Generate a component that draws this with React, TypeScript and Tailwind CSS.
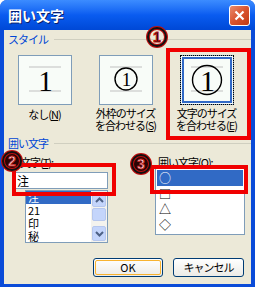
import React from "react";

const font = "font-['Noto_Sans_CJK_JP','Liberation_Sans',sans-serif]";

function Mark({ n, filled }: { n: string; filled?: boolean }) {
  return (
    <svg width="22" height="22" viewBox="0 0 22 22">
      <circle cx="11" cy="11" r="9" fill={filled ? "#2a0505" : "none"} stroke="#c01010" strokeWidth="4" />
      <circle cx="11" cy="11" r="9" fill="none" stroke="#111" strokeWidth="2" />
      <text
        x="11"
        y="16"
        textAnchor="middle"
        fontFamily="Liberation Sans, sans-serif"
        fontWeight="bold"
        fontSize="14"
        fill={filled ? "#f0e0e0" : "#111"}
        stroke="#c01010"
        strokeWidth="0.8"
      >
        {n}
      </text>
    </svg>
  );
}

function Preview({ kind }: { kind: "none" | "outer" | "inner" }) {
  return (
    <svg width="52" height="48" viewBox="0 0 52 48">
      <line x1="10" y1="11" x2="42" y2="11" stroke="#c0c0c0" />
      <line x1="10" y1="35" x2="42" y2="35" stroke="#c0c0c0" />
      {kind === "none" && (
        <text x="26" y="35" textAnchor="middle" fontFamily="Liberation Serif, serif" fontSize="29" fill="#000">
          1
        </text>
      )}
      {kind === "outer" && (
        <>
          <circle cx="26" cy="23" r="11" fill="none" stroke="#000" strokeWidth="1.4" />
          <text x="26" y="30" textAnchor="middle" fontFamily="Liberation Serif, serif" fontSize="19" fill="#000">
            1
          </text>
        </>
      )}
      {kind === "inner" && (
        <>
          <circle cx="26" cy="24" r="14.5" fill="none" stroke="#000" strokeWidth="1.4" />
          <text x="26" y="35" textAnchor="middle" fontFamily="Liberation Serif, serif" fontSize="30" fill="#000">
            1
          </text>
        </>
      )}
    </svg>
  );
}

function Arrow({ up }: { up?: boolean }) {
  return (
    <svg width="9" height="6" viewBox="0 0 9 6">
      <path d={up ? "M1 5 L4.5 1.5 L8 5" : "M1 1 L4.5 4.5 L8 1"} fill="none" stroke="#4d6185" strokeWidth="2" />
    </svg>
  );
}

export default function App() {
  return (
    <div className={`${font} relative w-[255px] h-[287px] bg-[#0A4BD8] rounded-t-[7px] flex flex-col overflow-hidden`}>
      {/* title bar */}
      <div className="h-[30px] shrink-0 flex items-center justify-between pl-[8px] pr-[5px] bg-gradient-to-b from-[#3C8CFF] via-[#0A5CF0] to-[#0048D6]">
        <span className="text-white font-bold text-[14px] leading-none [text-shadow:1px_1px_0_#0a1f6b]">囲い文字</span>
        <div className="w-[21px] h-[21px] rounded-[3px] border border-white bg-gradient-to-br from-[#E88A6B] via-[#D9532E] to-[#C23A12] flex items-center justify-center">
          <svg width="11" height="11" viewBox="0 0 11 11">
            <path d="M1.5 1.5 L9.5 9.5 M9.5 1.5 L1.5 9.5" stroke="#fff" strokeWidth="2.2" />
          </svg>
        </div>
      </div>

      {/* body */}
      <div className="flex-1 mx-[4px] mb-[3px] bg-[#ECE9D8] flex flex-col text-[11px] leading-[12px] tracking-[-1px] text-black">
        <div className="mt-[3px] pl-[4px] flex items-center gap-[6px]">
          <span className="text-[#0046D5]">スタイル</span>
          <div className="flex-1 h-px bg-[#D0CFC0]" />
        </div>

        <div className="mt-[10px] grid grid-cols-[81px_81px_81px]">
          <div className="flex flex-col items-center">
            <div className="w-[54px] h-[50px] border border-[#7F9DB9] bg-[#F8FCF8] flex items-center justify-center">
              <Preview kind="none" />
            </div>
            <div className="mt-[3px] text-center leading-[12px]">なし(<u>N</u>)</div>
          </div>
          <div className="flex flex-col items-center">
            <div className="w-[54px] h-[50px] border border-[#7F9DB9] bg-[#F8FCF8] flex items-center justify-center">
              <Preview kind="outer" />
            </div>
            <div className="mt-[2px] text-center leading-[12px]">
              外枠のサイズ
              <br />
              を合わせる(<u>S</u>)
            </div>
          </div>
          <div className="flex flex-col items-center">
            <div className="w-[54px] h-[50px] border border-[#7F9DB9] bg-[#F8FCF8] p-px">
              <div className="w-full h-full border-2 border-[#3169C6] flex items-center justify-center">
                <div className="border border-dotted border-black flex items-center justify-center">
                  <Preview kind="inner" />
                </div>
              </div>
            </div>
            <div className="mt-[2px] text-center leading-[12px]">
              文字のサイズ
              <br />
              を合わせる(<u>E</u>)
            </div>
          </div>
        </div>

        <div className="mt-[6px] pl-[4px] flex items-center gap-[6px]">
          <span className="text-[#0046D5]">囲い文字</span>
          <div className="flex-1 h-px bg-[#D0CFC0]" />
        </div>

        <div className="mt-[7px] flex pl-[9px]">
          <div className="w-[95px] flex flex-col">
            <div className="pl-[7px]">
              文字(<u>T</u>):
            </div>
            <div className="mt-[4px] h-[17px] border border-[#7F9DB9] bg-white flex items-center pl-[3px] text-[12px]">注</div>
            <div className="mt-[1px] ml-[12px] w-[83px] h-[53px] border border-[#7F9DB9] bg-white flex overflow-hidden text-[11px] tracking-normal">
              <div className="flex-1 flex flex-col">
                <div className="h-[13px] bg-[#316AC5] text-white pl-[2px] leading-[13px]">注</div>
                <div className="h-[13px] pl-[2px] leading-[13px]">21</div>
                <div className="h-[13px] pl-[2px] leading-[13px]">印</div>
                <div className="h-[13px] pl-[2px] leading-[13px]">秘</div>
              </div>
              <div className="w-[16px] bg-[#F4F3EE] flex flex-col">
                <div className="h-[15px] m-px rounded-[2px] border border-[#B6C7EE] bg-[#C4D5FB] flex items-center justify-center">
                  <Arrow up />
                </div>
                <div className="h-[13px] mx-px rounded-[2px] border border-[#B6C7EE] bg-[#C4D5FB]" />
                <div className="flex-1" />
                <div className="h-[15px] m-px rounded-[2px] border border-[#B6C7EE] bg-[#C4D5FB] flex items-center justify-center">
                  <Arrow />
                </div>
              </div>
            </div>
          </div>

          <div className="ml-[47px] flex flex-col">
            <div className="pl-[3px]">
              囲い文字(<u>O</u>):
            </div>
            <div className="mt-0 w-[90px] h-[67px] border border-[#7F9DB9] bg-white p-px flex flex-col overflow-hidden text-[12px]">
              <div className="h-[16px] bg-[#316AC5] text-white pl-[2px] flex items-center">○</div>
              <div className="h-[16px] pl-[2px] flex items-center">□</div>
              <div className="h-[16px] pl-[2px] flex items-center">△</div>
              <div className="h-[16px] pl-[2px] flex items-center">◇</div>
            </div>
          </div>
        </div>

        <div className="mt-auto mb-[7px] flex justify-end gap-[10px] pr-[7px]">
          <button className="w-[70px] h-[19px] rounded-[3px] border border-[#003C74] bg-gradient-to-b from-[#FFFFFF] to-[#ECEBE6] p-px tracking-normal">
            <div className="w-full h-full rounded-[2px] border border-[#F8B330] flex items-center justify-center leading-none">OK</div>
          </button>
          <button className="w-[71px] h-[19px] rounded-[3px] border border-[#003C74] bg-gradient-to-b from-[#FFFFFF] to-[#ECEBE6] flex items-center justify-center leading-none">
            キャンセル
          </button>
        </div>
      </div>

      {/* annotations */}
      <div className="absolute left-[166px] top-[48px] w-[85px] h-[92px] border-[4px] border-[#F00000]" />
      <div className="absolute left-[12px] top-[163px] w-[104px] h-[33px] border-[4px] border-[#F00000]" />
      <div className="absolute left-[150px] top-[165px] w-[98px] h-[29px] border-[4px] border-[#F00000]" />
      <div className="absolute left-[146px] top-[26px]">
        <Mark n="1" />
      </div>
      <div className="absolute left-[1px] top-[150px]">
        <Mark n="2" filled />
      </div>
      <div className="absolute left-[130px] top-[153px]">
        <Mark n="3" filled />
      </div>
    </div>
  );
}
